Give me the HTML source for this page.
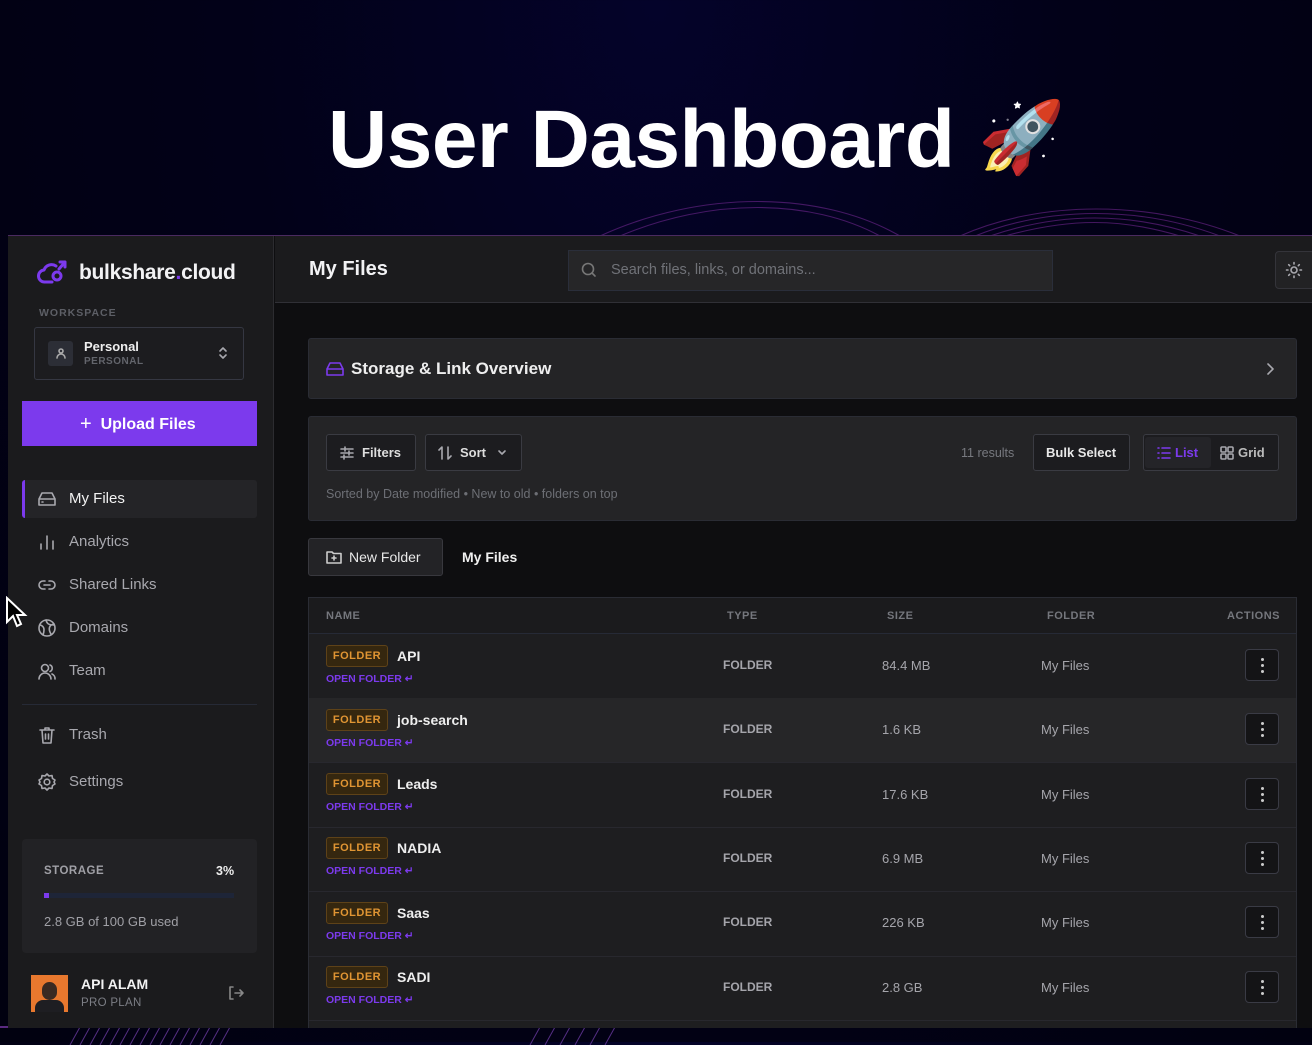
<!DOCTYPE html>
<html><head><meta charset="utf-8">
<style>
*{box-sizing:border-box;margin:0;padding:0}
body{width:1312px;height:1042px;overflow:hidden;position:relative;font-family:"Liberation Sans",sans-serif;
background:radial-gradient(ellipse at 50% 0%,#04032a 0%,#020118 45%,#010110 100%);color:#e8e8ea}
.a{position:absolute}
.t{position:absolute;white-space:nowrap}
svg{position:absolute}
.ico{fill:none;stroke:#a8a8ae;stroke-width:1.6;stroke-linecap:round;stroke-linejoin:round}
.btn{position:absolute;border:1px solid #3a3b42;border-radius:3px;background:#1c1c1f}
.badge{position:absolute;width:62px;height:22px;border:1px solid #5e4218;background:#35270f;border-radius:3px;color:#e09533;font-size:11px;font-weight:bold;text-align:center;line-height:20px;letter-spacing:.5px}
.open{position:absolute;color:#7c3aed;font-size:10.5px;font-weight:bold}
.cell{position:absolute;font-size:13px;color:#a5a5ab}
.dots{position:absolute;width:34px;height:32px;border:1px solid #3a3b45;border-radius:4px;background:#141416}
.dots i{position:absolute;left:15px;width:3px;height:3px;border-radius:2px;background:#ccc}
</style></head><body>

<svg width="1312" height="240" style="left:0;top:0">
<g fill="none" stroke="#7a2a9a" stroke-width="1.1" opacity=".55">
<path d="M600 236 C700 190 820 190 900 236"/><path d="M620 236 C710 198 810 198 880 236"/>
<path d="M960 236 C1040 200 1150 200 1240 236"/><path d="M975 236 C1050 206 1140 206 1220 236"/>
<path d="M990 236 C1060 212 1130 212 1200 236"/><path d="M1005 236 C1070 218 1120 218 1180 236"/>
</g></svg>
<svg width="1312" height="20" style="left:0;top:1025">
<g stroke="#6a3aa0" stroke-width="1" opacity=".8">
<path d="M70 20 L80 2M80 20 L90 2M90 20 L100 2M100 20 L110 2M110 20 L120 2M120 20 L130 2M130 20 L140 2M140 20 L150 2M150 20 L160 2M160 20 L170 2M170 20 L180 2M180 20 L190 2M190 20 L200 2M200 20 L210 2M210 20 L220 2M220 20 L230 2M530 20 L540 2M545 20 L555 2M560 20 L570 2M575 20 L585 2M590 20 L600 2M605 20 L615 2"/>
</g>
<path d="M0 2 H1312" stroke="#5a2a80" stroke-width="2"/></svg>

<div class="t" style="left:328px;top:93px;font-size:82px;font-weight:bold;color:#fff;letter-spacing:-.5px">User Dashboard</div>
<div class="t" style="left:978px;top:98px;font-size:70px;line-height:80px;font-family:'Noto Color Emoji',sans-serif">🚀</div>

<div class="a" style="left:8px;top:235px;width:1304px;height:793px;background:#0e0e10;border-top:1px solid #4a2a60"></div>
<div class="a" style="left:8px;top:236px;width:266px;height:792px;background:#1b1b1d;border-right:1px solid #2c2c30"></div>
<svg width="32" height="30" style="left:36px;top:257px" viewBox="0 0 32 30"><g fill="none" stroke="#7c3aed" stroke-width="3" stroke-linecap="round" stroke-linejoin="round"><path d="M16 25 H9 a6 6 0 0 1 -1 -12 a8 8 0 0 1 12 -4"/><circle cx="21" cy="19" r="4"/><path d="M23 12 L29 5 M24 5 H29 V10"/></g></svg>
<div class="t" style="left:79px;top:261px;font-size:21px;font-weight:bold;color:#f2f2f4;letter-spacing:-.3px">bulkshare<span style="color:#7c3aed">.</span>cloud</div>
<div class="t" style="left:39px;top:307px;font-size:10.5px;font-weight:bold;color:#5d5f66;letter-spacing:1px">WORKSPACE</div>
<div class="a" style="left:34px;top:327px;width:210px;height:53px;border:1px solid #353742;border-radius:3px;background:#1c1c1f"></div>
<div class="a" style="left:48px;top:341px;width:25px;height:25px;border-radius:3px;background:#2c2e36"></div>
<svg width="12" height="12" style="left:55px;top:347px" viewBox="0 0 12 12" class="ico"><circle cx="6" cy="4" r="2" stroke="#aaa"/><path d="M2 11 a4 4 0 0 1 8 0" stroke="#aaa"/></svg>
<div class="t" style="left:84px;top:339px;font-size:13px;font-weight:bold;color:#eee">Personal</div>
<div class="t" style="left:84px;top:356px;font-size:10px;font-weight:bold;color:#63656c;letter-spacing:.5px">PERSONAL</div>
<svg width="10" height="16" style="left:218px;top:345px" viewBox="0 0 10 16" class="ico"><path d="M2 6 L5 3 L8 6 M2 10 L5 13 L8 10"/></svg>
<div class="a" style="left:22px;top:401px;width:235px;height:45px;background:#7c3aed"></div>
<div class="t" style="left:80px;top:412px;font-size:16px;font-weight:bold;color:#fff"><span style="font-weight:normal;font-size:20px;position:relative;top:1px">+</span>&nbsp; Upload Files</div>

<div class="a" style="left:22px;top:480px;width:235px;height:38px;background:#242427;border-radius:3px;border-left:3px solid #7c3aed"></div>
<svg width="20" height="18" style="left:37px;top:490px" viewBox="0 0 20 18" class="ico"><path d="M2 9 L5 3 H15 L18 9 V15 H2 Z M2 9 H18 M5 12 H6"/></svg>
<div class="t" style="left:69px;top:490px;font-size:15px;color:#f2f2f2">My Files</div>
<svg width="20" height="18" style="left:37px;top:533px" viewBox="0 0 20 18" class="ico"><path d="M4 16 V11 M10 16 V3 M16 16 V8"/></svg>
<div class="t" style="left:69px;top:533px;font-size:15px;color:#a8a8ae">Analytics</div>
<svg width="20" height="18" style="left:37px;top:576px" viewBox="0 0 20 18" class="ico"><path d="M8 5 H6 a4 4 0 0 0 0 8 H8 M12 5 H14 a4 4 0 0 1 0 8 H12 M7 9 H13"/></svg>
<div class="t" style="left:69px;top:576px;font-size:15px;color:#a8a8ae">Shared Links</div>
<svg width="20" height="20" style="left:37px;top:618px" viewBox="0 0 20 20" class="ico"><circle cx="10" cy="10" r="8"/><path d="M3 7 C7 8 8 11 6 17 M17 6 C12 7 11 11 14 16 M9 2 C10 6 12 7 17 7"/></svg>
<div class="t" style="left:69px;top:619px;font-size:15px;color:#a8a8ae">Domains</div>
<svg width="20" height="20" style="left:37px;top:662px" viewBox="0 0 20 20" class="ico"><circle cx="8" cy="6" r="3.5"/><path d="M2 17 a6 6 0 0 1 12 0 M13 3 a3.5 3.5 0 0 1 0 6.5 M15 12 a5 5 0 0 1 3 5"/></svg>
<div class="t" style="left:69px;top:662px;font-size:15px;color:#a8a8ae">Team</div>
<div class="a" style="left:22px;top:704px;width:235px;height:1px;background:#262a36"></div>
<svg width="20" height="20" style="left:37px;top:725px" viewBox="0 0 20 20" class="ico"><path d="M3 5 H17 M8 5 V3 H12 V5 M5 5 L6 18 H14 L15 5 M8.5 9 V14 M11.5 9 V14"/></svg>
<div class="t" style="left:69px;top:726px;font-size:15px;color:#a8a8ae">Trash</div>
<svg width="20" height="20" style="left:37px;top:772px" viewBox="0 0 20 20" class="ico"><circle cx="10" cy="10" r="2.8"/><path d="M10 2 L12 4 L15 3.5 L15.5 6.5 L18 8 L17 10 L18 12 L15.5 13.5 L15 16.5 L12 16 L10 18 L8 16 L5 16.5 L4.5 13.5 L2 12 L3 10 L2 8 L4.5 6.5 L5 3.5 L8 4 Z"/></svg>
<div class="t" style="left:69px;top:773px;font-size:15px;color:#a8a8ae">Settings</div>

<div class="a" style="left:22px;top:839px;width:235px;height:114px;background:#222225;border-radius:4px"></div>
<div class="t" style="left:44px;top:865px;font-size:11.5px;font-weight:bold;color:#a0a0a6;letter-spacing:.5px">STORAGE</div>
<div class="t" style="left:216px;top:864px;font-size:12.5px;font-weight:bold;color:#eee">3%</div>
<div class="a" style="left:44px;top:893px;width:190px;height:5px;background:#1e2538"></div>
<div class="a" style="left:44px;top:893px;width:5px;height:5px;background:#7c3aed"></div>
<div class="t" style="left:44px;top:914px;font-size:13px;color:#a0a0a6">2.8 GB of 100 GB used</div>
<div class="a" style="left:31px;top:975px;width:37px;height:37px;background:#e8782e;overflow:hidden"><div class="a" style="left:11px;top:7px;width:15px;height:18px;border-radius:8px;background:#3a2a22"></div><div class="a" style="left:4px;top:25px;width:29px;height:14px;border-radius:8px 8px 0 0;background:#1e1e22"></div></div>
<div class="t" style="left:81px;top:976px;font-size:14px;font-weight:bold;color:#f2f2f2">API ALAM</div>
<div class="t" style="left:81px;top:997px;font-size:11.5px;color:#7c7e85;letter-spacing:.3px">PRO PLAN</div>
<svg width="18" height="18" style="left:227px;top:984px" viewBox="0 0 18 18" class="ico"><path d="M6 3 H3 V15 H6 M8 9 H16 M13 6 L16 9 L13 12" stroke="#888"/></svg>

<svg width="24" height="36" style="left:5px;top:596px" viewBox="0 0 24 36"><path d="M2 2 L2 26 L8 20 L12 30 L16 28 L12 19 L20 19 Z" fill="#000" stroke="#fff" stroke-width="2"/></svg>

<div class="a" style="left:275px;top:236px;width:1037px;height:67px;background:#1b1b1d;border-bottom:1px solid #303036"></div>
<div class="t" style="left:309px;top:258px;font-size:20px;font-weight:bold;color:#f2f2f4">My Files</div>
<div class="a" style="left:568px;top:250px;width:485px;height:41px;background:#262628;border:1px solid #2a2e3a"></div>
<svg width="18" height="18" style="left:580px;top:261px" viewBox="0 0 18 18" class="ico"><circle cx="8" cy="8" r="5.5" stroke="#777"/><path d="M12 12 L15 15" stroke="#777"/></svg>
<div class="t" style="left:611px;top:262px;font-size:14.5px;color:#707278">Search files, links, or domains...</div>
<div class="a" style="left:1275px;top:251px;width:40px;height:38px;border:1px solid #34343a;border-radius:4px;background:#222224"></div>
<svg width="18" height="18" style="left:1285px;top:261px" viewBox="0 0 18 18" class="ico"><circle cx="9" cy="9" r="3"/><path d="M9 1.5 V3 M9 15 V16.5 M1.5 9 H3 M15 9 H16.5 M3.7 3.7 L4.7 4.7 M13.3 13.3 L14.3 14.3 M3.7 14.3 L4.7 13.3 M13.3 4.7 L14.3 3.7"/></svg>

<div class="a" style="left:308px;top:338px;width:989px;height:61px;background:#242426;border-radius:3px;border:1px solid #2a2c34"></div>
<svg width="18" height="16" style="left:326px;top:361px" viewBox="0 0 18 16" class="ico"><path d="M1 8 L4 2 H14 L17 8 V14 H1 Z M1 8 H17" stroke="#7c3aed"/></svg>
<div class="t" style="left:351px;top:359px;font-size:17px;font-weight:bold;color:#eee">Storage &amp; Link Overview</div>
<svg width="12" height="14" style="left:1264px;top:362px" viewBox="0 0 12 14" class="ico"><path d="M4 2 L9 7 L4 12"/></svg>

<div class="a" style="left:308px;top:416px;width:989px;height:105px;background:#242426;border-radius:3px;border:1px solid #2a2c34"></div>
<div class="btn" style="left:326px;top:434px;width:90px;height:37px"></div>
<svg width="14" height="14" style="left:340px;top:446px" viewBox="0 0 14 14" class="ico"><path d="M1 3 H13 M1 7 H13 M1 11 H13 M5 1 V5 M9 5 V9 M4 9 V13"/></svg>
<div class="t" style="left:362px;top:445px;font-size:13px;font-weight:bold;color:#ddd">Filters</div>
<div class="btn" style="left:425px;top:434px;width:97px;height:37px"></div>
<svg width="14" height="14" style="left:438px;top:446px" viewBox="0 0 14 14" class="ico"><path d="M4 13 V1 L1 4 M10 1 V13 L13 10"/></svg>
<div class="t" style="left:460px;top:445px;font-size:13px;font-weight:bold;color:#ddd">Sort</div>
<svg width="10" height="10" style="left:497px;top:448px" viewBox="0 0 10 10" class="ico"><path d="M2 3 L5 6 L8 3"/></svg>
<div class="t" style="left:961px;top:446px;font-size:12.5px;color:#77797f">11 results</div>
<div class="btn" style="left:1033px;top:434px;width:97px;height:37px"></div>
<div class="t" style="left:1046px;top:445px;font-size:13px;font-weight:bold;color:#e8e8e8">Bulk Select</div>
<div class="btn" style="left:1143px;top:434px;width:136px;height:37px"></div>
<div class="a" style="left:1145px;top:437px;width:66px;height:31px;background:#242428;border-radius:3px"></div>
<svg width="14" height="14" style="left:1157px;top:446px" viewBox="0 0 14 14" class="ico"><path d="M1 2 H2 M5 2 H13 M1 7 H2 M5 7 H13 M1 12 H2 M5 12 H13" stroke="#7c3aed"/></svg>
<div class="t" style="left:1175px;top:445px;font-size:13px;color:#7c3aed;font-weight:bold">List</div>
<svg width="14" height="14" style="left:1220px;top:446px" viewBox="0 0 14 14" class="ico"><rect x="1" y="1" width="5" height="5" rx="1"/><rect x="8" y="1" width="5" height="5" rx="1"/><rect x="1" y="8" width="5" height="5" rx="1"/><rect x="8" y="8" width="5" height="5" rx="1"/></svg>
<div class="t" style="left:1238px;top:445px;font-size:13px;color:#bbb;font-weight:bold">Grid</div>
<div class="t" style="left:326px;top:487px;font-size:12.5px;color:#6d6f75">Sorted by Date modified • New to old • folders on top</div>

<div class="btn" style="left:308px;top:538px;width:135px;height:38px;background:#232326;border-color:#38383e"></div>
<svg width="16" height="14" style="left:326px;top:550px" viewBox="0 0 16 14" class="ico"><path d="M1 2 H6 L7.5 3.5 H15 V13 H1 Z M8 6 V10 M6 8 H10" stroke="#ccc"/></svg>
<div class="t" style="left:349px;top:549px;font-size:14px;color:#e8e8e8">New Folder</div>
<div class="t" style="left:462px;top:549px;font-size:14px;font-weight:bold;color:#f0f0f0">My Files</div>

<div class="a" style="left:308px;top:597px;width:989px;height:431px;background:#1e1e20;border:1px solid #2a2c34;border-bottom:none;overflow:hidden">
<div class="a" style="left:0;top:0;width:989px;height:36px;background:#1b1b1d;border-bottom:1px solid #262a36"></div>
<div class="a" style="left:0;top:100px;width:989px;height:64px;background:#262628"></div>
<div class="a" style="left:0;top:164px;width:989px;height:1px;background:#28282e"></div>
<div class="a" style="left:0;top:229px;width:989px;height:1px;background:#28282e"></div>
<div class="a" style="left:0;top:293px;width:989px;height:1px;background:#28282e"></div>
<div class="a" style="left:0;top:358px;width:989px;height:1px;background:#28282e"></div>
<div class="a" style="left:0;top:422px;width:989px;height:1px;background:#28282e"></div>
</div>
<div class="t" style="left:326px;top:610px;font-size:11px;font-weight:bold;color:#75777d;letter-spacing:.5px">NAME</div>
<div class="t" style="left:727px;top:610px;font-size:11px;font-weight:bold;color:#75777d;letter-spacing:.5px">TYPE</div>
<div class="t" style="left:887px;top:610px;font-size:11px;font-weight:bold;color:#75777d;letter-spacing:.5px">SIZE</div>
<div class="t" style="left:1047px;top:610px;font-size:11px;font-weight:bold;color:#75777d;letter-spacing:.5px">FOLDER</div>
<div class="t" style="left:1227px;top:610px;font-size:11px;font-weight:bold;color:#75777d;letter-spacing:.5px">ACTIONS</div>

<div class="badge" style="left:326px;top:645px">FOLDER</div><div class="t" style="left:397px;top:648px;font-size:14px;font-weight:bold;color:#eee">API</div><div class="open" style="left:326px;top:673px">OPEN FOLDER ↵</div><div class="cell" style="left:723px;top:658px;font-size:12px;font-weight:bold">FOLDER</div><div class="cell" style="left:882px;top:658px">84.4 MB</div><div class="cell" style="left:1041px;top:658px">My Files</div><div class="dots" style="left:1245px;top:649px"><i style="top:8px"></i><i style="top:14px"></i><i style="top:20px"></i></div>

<div class="badge" style="left:326px;top:709px">FOLDER</div><div class="t" style="left:397px;top:712px;font-size:14px;font-weight:bold;color:#eee">job-search</div><div class="open" style="left:326px;top:737px">OPEN FOLDER ↵</div><div class="cell" style="left:723px;top:722px;font-size:12px;font-weight:bold">FOLDER</div><div class="cell" style="left:882px;top:722px">1.6 KB</div><div class="cell" style="left:1041px;top:722px">My Files</div><div class="dots" style="left:1245px;top:713px"><i style="top:8px"></i><i style="top:14px"></i><i style="top:20px"></i></div>

<div class="badge" style="left:326px;top:773px">FOLDER</div><div class="t" style="left:397px;top:776px;font-size:14px;font-weight:bold;color:#eee">Leads</div><div class="open" style="left:326px;top:801px">OPEN FOLDER ↵</div><div class="cell" style="left:723px;top:787px;font-size:12px;font-weight:bold">FOLDER</div><div class="cell" style="left:882px;top:787px">17.6 KB</div><div class="cell" style="left:1041px;top:787px">My Files</div><div class="dots" style="left:1245px;top:778px"><i style="top:8px"></i><i style="top:14px"></i><i style="top:20px"></i></div>

<div class="badge" style="left:326px;top:837px">FOLDER</div><div class="t" style="left:397px;top:840px;font-size:14px;font-weight:bold;color:#eee">NADIA</div><div class="open" style="left:326px;top:865px">OPEN FOLDER ↵</div><div class="cell" style="left:723px;top:851px;font-size:12px;font-weight:bold">FOLDER</div><div class="cell" style="left:882px;top:851px">6.9 MB</div><div class="cell" style="left:1041px;top:851px">My Files</div><div class="dots" style="left:1245px;top:842px"><i style="top:8px"></i><i style="top:14px"></i><i style="top:20px"></i></div>

<div class="badge" style="left:326px;top:902px">FOLDER</div><div class="t" style="left:397px;top:905px;font-size:14px;font-weight:bold;color:#eee">Saas</div><div class="open" style="left:326px;top:930px">OPEN FOLDER ↵</div><div class="cell" style="left:723px;top:915px;font-size:12px;font-weight:bold">FOLDER</div><div class="cell" style="left:882px;top:915px">226 KB</div><div class="cell" style="left:1041px;top:915px">My Files</div><div class="dots" style="left:1245px;top:906px"><i style="top:8px"></i><i style="top:14px"></i><i style="top:20px"></i></div>

<div class="badge" style="left:326px;top:966px">FOLDER</div><div class="t" style="left:397px;top:969px;font-size:14px;font-weight:bold;color:#eee">SADI</div><div class="open" style="left:326px;top:994px">OPEN FOLDER ↵</div><div class="cell" style="left:723px;top:980px;font-size:12px;font-weight:bold">FOLDER</div><div class="cell" style="left:882px;top:980px">2.8 GB</div><div class="cell" style="left:1041px;top:980px">My Files</div><div class="dots" style="left:1245px;top:971px"><i style="top:8px"></i><i style="top:14px"></i><i style="top:20px"></i></div>

</body></html>
